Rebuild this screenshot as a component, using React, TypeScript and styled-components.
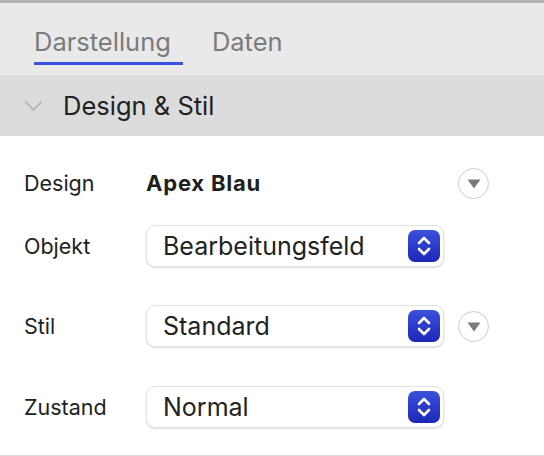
import styled, { createGlobalStyle } from 'styled-components';

const GlobalStyle = createGlobalStyle`
	html, body {
		margin: 0;
		padding: 0;
		background: #ffffff;
	}
	body {
		font-family: Inter, "Noto Sans", "Liberation Sans", sans-serif;
		-webkit-font-smoothing: antialiased;
	}
`;

const rows = [
	{ label: 'Objekt', value: 'Bearbeitungsfeld', top: 21, menu: false },
	{ label: 'Stil', value: 'Standard', top: 38, menu: true },
	{ label: 'Zustand', value: 'Normal', top: 39, menu: false },
];

export default function App() {
	return (
		<>
			<GlobalStyle />
			<Panel>
				<TopLine />
				<TabBar>
					<Tab $active>Darstellung</Tab>
					<Tab>Daten</Tab>
				</TabBar>
				<SectionHeader>
					<Chevron viewBox='0 0 18 10'>
						<path d='M1 1 L9 9 L17 1' />
					</Chevron>
					<span>Design &amp; Stil</span>
				</SectionHeader>
				<Body>
					<Row $top={26}>
						<Label>Design</Label>
						<Value>Apex Blau</Value>
						<MenuButton />
					</Row>
					{rows.map((r) => (
						<Row key={r.label} $top={r.top}>
							<Label>{r.label}</Label>
							<Select>
								<span>{r.value}</span>
								<Stepper>
									<svg width='16' height='24' viewBox='0 0 16 24'>
										<path
											d='M3 9 L8 4 L13 9 M3 15 L8 20 L13 15'
											fill='none'
											stroke='#ffffff'
											strokeWidth='2.6'
											strokeLinecap='round'
											strokeLinejoin='round'
										/>
									</svg>
								</Stepper>
							</Select>
							{r.menu && <MenuButton />}
						</Row>
					))}
				</Body>
			</Panel>
		</>
	);
}

function MenuButton() {
	return (
		<CircleButton>
			<svg width='14' height='10' viewBox='0 0 14 10'>
				<path d='M0.5 0.5 L13.5 0.5 L7 9.5 Z' fill='#7a7a7a' />
			</svg>
		</CircleButton>
	);
}

const Panel = styled.div`
	width: 544px;
	height: 456px;
	background: #ffffff;
	display: flex;
	flex-direction: column;
	overflow: hidden;
`;

const TopLine = styled.div`
	height: 3px;
	background: #b1b1b1;
`;

const TabBar = styled.div`
	height: 72px;
	background: #e9e9e9;
	display: flex;
	align-items: flex-start;
	padding-left: 34px;
	gap: 29px;
	box-sizing: border-box;
	padding-top: 24px;
`;

const Tab = styled.div<{ $active?: boolean }>`
	font-size: 25.5px;
	line-height: 30px;
	color: #7b7b7b;
	padding-bottom: 5px;
	padding-right: ${(p) => (p.$active ? '12px' : '0')};
	border-bottom: 3px solid ${(p) => (p.$active ? '#3752df' : 'transparent')};
`;

const SectionHeader = styled.div`
	height: 61px;
	background: #dcdcdc;
	display: flex;
	align-items: center;
	padding-left: 25px;
	gap: 21px;
	font-size: 25.5px;
	color: #222222;
`;

const Chevron = styled.svg`
	width: 17px;
	height: 10px;
	fill: none;
	stroke: #b4b4b4;
	stroke-width: 1.8;
	stroke-linecap: round;
	stroke-linejoin: round;
`;

const Body = styled.div`
	flex: 1;
	display: flex;
	flex-direction: column;
	padding-left: 24px;
	border-bottom: 1px solid #dddddd;
`;

const Row = styled.div<{ $top: number }>`
	display: flex;
	align-items: center;
	height: 42px;
	margin-top: ${(p) => p.$top}px;
`;

const Label = styled.div`
	width: 122px;
	font-size: 21.5px;
	color: #222222;
	flex-shrink: 0;
`;

const Value = styled.div`
	width: 298px;
	font-size: 22px;
	font-weight: 700;
	letter-spacing: 0.8px;
	color: #1e1e1e;
`;

const Select = styled.div`
	width: 298px;
	height: 42px;
	box-sizing: border-box;
	display: flex;
	align-items: center;
	justify-content: space-between;
	padding-left: 16px;
	padding-right: 3px;
	background: #ffffff;
	border-radius: 9px;
	border: 1px solid #e2e2e2;
	box-shadow: 0 1px 2px rgba(0, 0, 0, 0.14);
	font-size: 25px;
	color: #222222;
`;

const Stepper = styled.div`
	width: 32px;
	height: 32px;
	border-radius: 7px;
	background: linear-gradient(180deg, #3b50dc 0%, #1d28b6 100%);
	display: flex;
	align-items: center;
	justify-content: center;
`;

const CircleButton = styled.div`
	width: 31px;
	height: 31px;
	box-sizing: border-box;
	margin-left: 14px;
	border-radius: 50%;
	border: 1.5px solid #cdcdcd;
	display: flex;
	align-items: center;
	justify-content: center;
	padding-top: 2px;
`;
